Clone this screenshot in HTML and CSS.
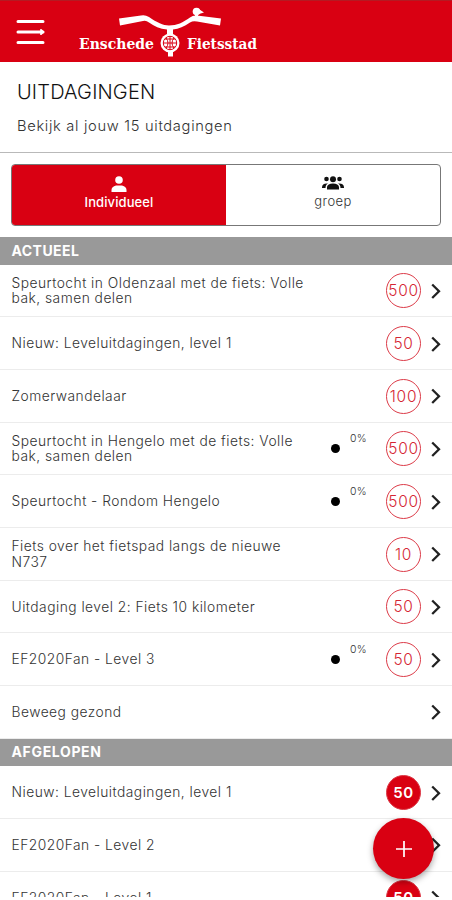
FILE: index.html
```html
<!DOCTYPE html>
<html lang="nl">
<head>
<meta charset="utf-8">
<title>Uitdagingen</title>
<link rel="stylesheet" href="styles.css">
</head>
<body>
<svg class="defs" aria-hidden="true">
  <symbol id="chevron" viewBox="0 0 12 18"><path d="M2.200 2.500 9 9.200 2.200 16" fill="none" stroke="#222" stroke-width="2.300"/></symbol>
</svg>
<div class="app">
  <header class="bar">
    <svg class="menu" viewBox="0 0 30 26" fill="none" stroke="#fff" stroke-width="3" stroke-linecap="round"><path d="M2 2.500H27M2 13H27M2 23.500H27"/><path d="M25 11 27 13 25 15" stroke-width="2"/></svg>
    <svg class="logo" viewBox="0 0 184 56" fill="#fff">
      <path d="M41 17.500 63 14.500Q67 13.500 71 16C79 21.500 85 24.500 91 24.500C99 24.500 105 21.500 112 16.500Q115 14 119 14.500L143 17.500 142 24.500 119 20.500Q115 19.500 112 21.500C106 25.500 101 28 95 28.500V33H89V28.500C82 28 76 25 71 21.500Q68 19 65 20L42 24.500Z"/>
      <circle cx="118.500" cy="10.500" r="3.800"/><path d="M120 7.500 126 11.500 121 13Z"/><path d="M117 13h3v3h-3zM90 30h5v6h-5zM90 48h5v7.500h-5z"/>
      <circle cx="92" cy="42" r="9.500"/>
      <g fill="none" stroke="#d90012" stroke-width="1"><circle cx="92" cy="42" r="6.700"/><path d="M85 42H99M92 35.500V48.500M87 38H97M87 46H97M88 37Q92 42 88 47M96 37Q92 42 96 47"/></g>
      <text class="wordmark" x="1" y="48" textLength="75" lengthAdjust="spacingAndGlyphs">Enschede</text>
      <text class="wordmark" x="109" y="48" textLength="70" lengthAdjust="spacingAndGlyphs">Fietsstad</text>
    </svg>
  </header>
  <section class="intro"><h1>UITDAGINGEN</h1><p>Bekijk al jouw 15 uitdagingen</p></section>
  <nav class="tabs">
    <div class="tab active"><svg viewBox="0 0 16 16" fill="currentColor"><circle cx="8" cy="4" r="3.800"/><path d="M.5 16V14Q.5 10.500 5 9.500H11Q15.500 10.500 15.500 14V16Z"/></svg><span>Individueel</span></div>
    <div class="tab group"><svg viewBox="0 0 22 14" fill="currentColor"><circle cx="4.500" cy="3" r="2.300"/><circle cx="11" cy="3.200" r="3"/><circle cx="17.500" cy="3" r="2.300"/><path d="M5 13.500V11Q5.500 7.500 11 7.500T17 11V13.500ZM0 11.500Q0 7 6 7.500Q3.500 8.500 3.500 12H0ZM22 11.500Q22 7 16 7.500Q18.500 8.500 18.500 12H22Z"/></svg><span>groep</span></div>
  </nav>
  <h2>ACTUEEL</h2>
  <ul>
    <li><span class="name">Speurtocht in Oldenzaal met de fiets: Volle<br>bak, samen delen</span><b>500</b><svg class="go"><use href="#chevron"/></svg></li>
    <li><span class="name">Nieuw: Leveluitdagingen, level 1</span><b>50</b><svg class="go"><use href="#chevron"/></svg></li>
    <li><span class="name">Zomerwandelaar</span><b>100</b><svg class="go"><use href="#chevron"/></svg></li>
    <li><span class="name">Speurtocht in Hengelo met de fiets: Volle<br>bak, samen delen</span><i></i><em>0%</em><b>500</b><svg class="go"><use href="#chevron"/></svg></li>
    <li><span class="name">Speurtocht - Rondom Hengelo</span><i></i><em>0%</em><b>500</b><svg class="go"><use href="#chevron"/></svg></li>
    <li><span class="name">Fiets over het fietspad langs de nieuwe<br>N737</span><b>10</b><svg class="go"><use href="#chevron"/></svg></li>
    <li><span class="name">Uitdaging level 2: Fiets 10 kilometer</span><b>50</b><svg class="go"><use href="#chevron"/></svg></li>
    <li><span class="name">EF2020Fan - Level 3</span><i></i><em>0%</em><b>50</b><svg class="go"><use href="#chevron"/></svg></li>
    <li><span class="name">Beweeg gezond</span><svg class="go"><use href="#chevron"/></svg></li>
  </ul>
  <h2 class="wide">AFGELOPEN</h2>
  <ul class="past">
    <li><span class="name">Nieuw: Leveluitdagingen, level 1</span><b>50</b><svg class="go"><use href="#chevron"/></svg></li>
    <li><span class="name">EF2020Fan - Level 2</span><b>50</b><svg class="go"><use href="#chevron"/></svg></li>
    <li><span class="name">EF2020Fan - Level 1</span><b>50</b><svg class="go"><use href="#chevron"/></svg></li>
  </ul>
  <button class="add" aria-label="Toevoegen"><svg viewBox="0 0 16 16" stroke="#fff" stroke-width="1.700"><path d="M8 0V16M0 8H16"/></svg></button>
</div>
</body>
</html>
```
FILE: styles.css
```css
* { box-sizing: border-box; }
body { margin: 0; background: #fff; font-family: Inter, "Liberation Sans", sans-serif; color: #333; height: 900px; overflow: hidden; }
.defs { position: absolute; width: 0; height: 0; }
.app { position: relative; height: 897px; overflow: hidden; }
.bar { height: 62px; background: #d90012; border-top: 1px solid #b51a22; display: flex; align-items: flex-start; padding-left: 16px; }
.menu { width: 30px; height: 26px; margin-top: 18px; }
.logo { width: 184px; height: 56px; margin: 0 0 0 32px; }
.wordmark { font: bold 15.5px "DejaVu Serif", serif; }
.intro { height: 91px; padding: 18px 17px 0; border-bottom: 1px solid #b9b9b9; }
h1 { margin: 0; font-size: 20px; line-height: 24px; font-weight: 300; letter-spacing: .15px; color: #111; }
.intro p { margin: 13px 0 0; font-size: 14.7px; line-height: 18px; font-weight: 300; letter-spacing: .68px; }
.tabs { margin: 11px; height: 62px; display: flex; border: 1px solid #777; border-radius: 4px; overflow: hidden; }
.tab { flex: 1; display: flex; flex-direction: column; align-items: center; padding-top: 11px; font-size: 13px; line-height: 16px; font-weight: 300; letter-spacing: .4px; }
.tab svg { width: 16px; height: 16px; margin-bottom: 2px; }
.active { background: #d90012; color: #fff; font-weight: 500; letter-spacing: .1px; }
.tab.group svg { width: 22px; height: 14px; color: #111; margin-bottom: 3px; }
h2 { margin: 0; height: 27.6px; background: #999; color: #fff; padding-left: 11.5px; font-size: 14px; line-height: 27px; font-weight: 700; letter-spacing: .45px; }
.wide { letter-spacing: .65px; line-height: 26px; }
ul { list-style: none; margin: 0; padding: 0; }
li { height: 52.68px; border-bottom: 1px solid #ececec; display: flex; align-items: center; padding: 1px 10px 0 11.5px; }
.name { flex: 1; padding-top: 1px; font-size: 13.8px; line-height: 15.5px; font-weight: 300; letter-spacing: .48px; white-space: nowrap; }
li b { width: 35px; height: 35px; border: 1px solid #dc3b48; border-radius: 50%; display: flex; align-items: center; justify-content: center; color: #d52634; font-size: 15.5px; font-weight: 300; letter-spacing: .7px; }
.past b { background: #d90012; color: #fff; font-weight: 600; font-size: 15px; }
.go { width: 12px; height: 18px; margin-left: 9px; }
li i { width: 9px; height: 9px; border-radius: 50%; background: #000; }
li em { width: 18px; margin: 0 18px 20px 10px; font-size: 10.5px; line-height: 12px; font-style: normal; font-weight: 300; letter-spacing: .2px; }
.add { position: absolute; left: 373px; top: 818px; width: 61px; height: 61px; padding: 0; border: 0; border-radius: 50%; background: #d90012; box-shadow: 0 3px 6px rgba(0,0,0,.35); display: flex; align-items: center; justify-content: center; }
.add svg { width: 16px; height: 16px; }
```
